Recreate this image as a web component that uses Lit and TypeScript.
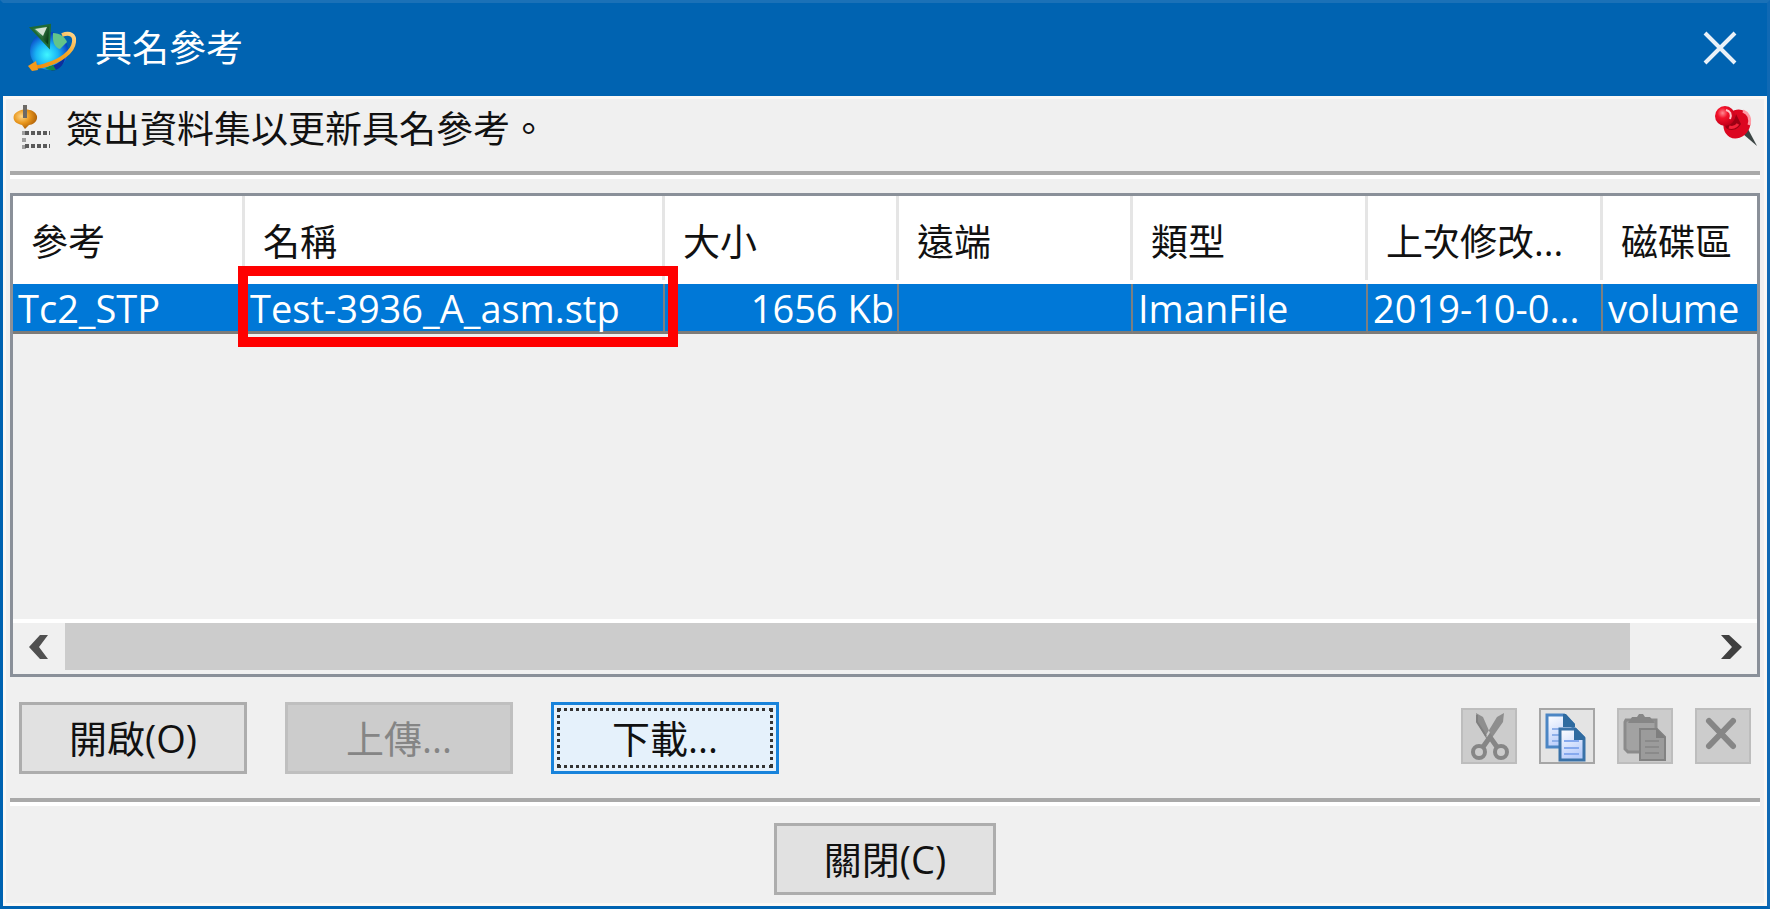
import { LitElement, html, css, svg } from "lit";
import { customElement, state } from "lit/decorators.js";

const logoIcon = svg`
  <defs>
    <radialGradient id="globe" cx="45%" cy="60%" r="58%">
      <stop offset="0" stop-color="#3ff6ff"></stop>
      <stop offset="0.5" stop-color="#19b4f5"></stop>
      <stop offset="1" stop-color="#0a3fc4"></stop>
    </radialGradient>
    <linearGradient id="cone" x1="0" y1="0" x2="1" y2="0.4">
      <stop offset="0" stop-color="#2c7a45"></stop>
      <stop offset="0.5" stop-color="#3f8a55"></stop>
      <stop offset="1" stop-color="#0b3d17"></stop>
    </linearGradient>
    <linearGradient id="ring" x1="0" y1="1" x2="1" y2="0">
      <stop offset="0" stop-color="#f08a0c"></stop>
      <stop offset="0.6" stop-color="#f5a623"></stop>
      <stop offset="1" stop-color="#ffd58a"></stop>
    </linearGradient>
  </defs>
  <circle cx="21" cy="26" r="19" fill="url(#globe)"></circle>
  <path d="M25 8c7 0 12 4 14 9l-7 7c-5-1-8-7-7-16z" fill="#63c48a"></path>
  <path d="M20 42c6-1 12-5 17-9-1 7-6 12-13 13z" fill="#0d2f9c"></path>
  <path d="M17 43l8-3 3 5c-4 1-8 0-11-2z" fill="#138a4a"></path>
  <path d="M34 10c8-3 13 0 12 7-1 10-14 19-28 23-5 2-9 2-13 2" fill="none" stroke="url(#ring)" stroke-width="4"></path>
  <path d="M0 41l8-5 2 9-6 1z" fill="#f59a1c"></path>
  <path d="M3 3l19-3-1 22z" fill="url(#cone)" stroke="#1f6a35" stroke-width="2"></path>
  <path d="M7 4l12-2-4 9z" fill="#d4e3d5"></path>
`;

const checkoutIcon = svg`
  <defs>
    <radialGradient id="amber" cx="35%" cy="35%" r="70%">
      <stop offset="0" stop-color="#ffd98c"></stop>
      <stop offset="0.5" stop-color="#e8961c"></stop>
      <stop offset="1" stop-color="#a85a06"></stop>
    </radialGradient>
  </defs>
  <path d="M1 10c4-7 20-8 23 1 1 6-5 9-8 9l-4 4-3-4C4 19-1 16 1 10z" fill="url(#amber)"></path>
  <path d="M10 0h4v13h-4z" fill="#6d6a66"></path>
  <path d="M11 26v18" stroke="#a0a0a0" stroke-width="4" stroke-dasharray="4 3"></path>
  <path d="M12 28h25M12 41h25" stroke="#5a5a5a" stroke-width="4" stroke-dasharray="4 2"></path>
`;

const pinIcon = svg`
  <defs>
    <radialGradient id="pinhead" cx="38%" cy="35%" r="65%">
      <stop offset="0" stop-color="#ff8a92"></stop>
      <stop offset="0.4" stop-color="#f3122a"></stop>
      <stop offset="1" stop-color="#c4001a"></stop>
    </radialGradient>
  </defs>
  <path d="M28 29l5-5 9 17z" fill="#3b4443"></path>
  <ellipse cx="22" cy="19" rx="13" ry="15" transform="rotate(30 22 19)" fill="#dc0620"></ellipse>
  <path d="M28 6c5 2 8 7 6 14" fill="none" stroke="#ff9aa4" stroke-width="3"></path>
  <path d="M9 18c5 3 11-2 12-9l5 10c-4 7-11 7-15 4z" fill="#9c0013"></path>
  <path d="M14 22c3 1 7 0 9-3" fill="none" stroke="#f5223a" stroke-width="3"></path>
  <circle cx="10" cy="11" r="10" fill="url(#pinhead)"></circle>
  <path d="M11 5c4 1 6 4 4 9" fill="none" stroke="#ffc4c9" stroke-width="2"></path>
`;

const cutIcon = svg`
  <path d="M15 5l7 4 7 16-3 7-10-18zM43 5l-7 4-11 18 3 7 14-20z" fill="#8e8e8e"></path>
  <path d="M16 7v7l9 14" fill="none" stroke="#7f7f7f" stroke-width="2"></path>
  <circle cx="18" cy="44" r="6" fill="none" stroke="#868686" stroke-width="4"></circle>
  <circle cx="40" cy="44" r="6" fill="none" stroke="#868686" stroke-width="4"></circle>
  <path d="M22 39l7-10 7 10" fill="none" stroke="#868686" stroke-width="5"></path>
`;

const copyIcon = svg`
  <defs>
    <linearGradient id="sheet" x1="0" y1="0" x2="0.4" y2="1">
      <stop offset="0" stop-color="#ffffff"></stop>
      <stop offset="1" stop-color="#b9cdfb"></stop>
    </linearGradient>
  </defs>
  <path d="M8 7h17l9 9v23H8z" fill="url(#sheet)" stroke="#4c86c4" stroke-width="3"></path>
  <path d="M24 6h3l9 10v3H24z" fill="#2f6ba0"></path>
  <path d="M13 21h8M13 27h8M13 33h8" stroke="#8fb0ea" stroke-width="2"></path>
  <path d="M21 21h15l9 9v22H21z" fill="url(#sheet)" stroke="#3a72a8" stroke-width="3"></path>
  <path d="M35 20h2l9 9v3H35z" fill="#2f6ba0"></path>
  <path d="M25 33h15M25 40h15M25 46h15" stroke="#86a9ee" stroke-width="2"></path>
`;

const pasteIcon = svg`
  <path d="M9 12h30v32H11l-3-3V14z" fill="#a2a2a2" stroke="#8b8b8b" stroke-width="3"></path>
  <path d="M11 15l4-6h5l2-3h4l2 3h5l5 6z" fill="#868686"></path>
  <path d="M23 21h17l8 8v23H23z" fill="#9b9b9b" stroke="#828282" stroke-width="2"></path>
  <path d="M39 20v10h9z" fill="#7e7e7e"></path>
  <path d="M28 33h14M28 39h14M28 45h14" stroke="#8a8a8a" stroke-width="2"></path>
`;

const deleteIcon = svg`
  <path d="M14 13l24 25M38 13L14 38" stroke="#868686" stroke-width="6" stroke-linecap="round"></path>
`;

interface Column {
  key: string;
  label: string;
  kind: string;
}

const columns: Column[] = [
  { key: "reference", label: "參考", kind: "reference" },
  { key: "name", label: "名稱", kind: "name" },
  { key: "size", label: "大小", kind: "size" },
  { key: "remote", label: "遠端", kind: "remote" },
  { key: "type", label: "類型", kind: "type" },
  { key: "modified", label: "上次修改...", kind: "modified" },
  { key: "volume", label: "磁碟區", kind: "volume" },
];

const rows: Record<string, string>[] = [
  {
    reference: "Tc2_STP",
    name: "Test-3936_A_asm.stp",
    size: "1656 Kb",
    remote: "",
    type: "ImanFile",
    modified: "2019-10-0...",
    volume: "volume",
  },
];

const tools = [
  { label: "剪下", icon: cutIcon, disabled: true },
  { label: "複製", icon: copyIcon, disabled: false },
  { label: "貼上", icon: pasteIcon, disabled: true },
  { label: "刪除", icon: deleteIcon, disabled: true },
];

@customElement("app-root")
export class AppRoot extends LitElement {
  @state() private selected = 0;

  static styles = css`
    :host {
      display: flex;
      flex-direction: column;
      box-sizing: border-box;
      min-height: 100vh;
      border: 3px solid #0063b1;
      border-top-color: #1b71b7;
      border-right-color: #1069b4;
      background: #f0f0f0;
      color: #111;
      font-family: "Open Sans", "Noto Sans CJK TC", sans-serif;
      font-size: 37px;
      line-height: 48px;
    }
    * {
      box-sizing: border-box;
    }
    button {
      font: inherit;
      color: inherit;
      padding: 0;
      margin: 0;
    }
    svg {
      display: block;
      flex: none;
      overflow: visible;
    }
    .titlebar {
      display: flex;
      align-items: center;
      height: 93px;
      padding: 0 31px 4px 25px;
      background: #0063b1;
      color: #fff;
    }
    .title {
      flex: 1;
      margin: 0 0 0 17px;
      font-size: 37px;
      font-weight: 400;
    }
    .window-close {
      border: 0;
      background: none;
    }
    .body {
      flex: 1;
      display: flex;
      flex-direction: column;
      padding: 0 4px 8px 4px;
      border: 3px solid #faf8f5;
    }
    .message {
      display: flex;
      align-items: flex-start;
      height: 72px;
      padding: 6px 3px 0 3px;
    }
    .message-text {
      flex: 1;
      margin: 0 0 0 13px;
    }
    .pin {
      border: 0;
      background: none;
    }
    .rule {
      flex: none;
      width: 100%;
      height: 8px;
      margin: 0;
      border: 0;
      border-top: 4px solid #a9a9a9;
      background: #fff;
    }
    .grid-box {
      flex: 1;
      display: flex;
      flex-direction: column;
      margin-top: 14px;
      border: 3px solid #8a9099;
    }
    .viewport {
      flex: 1;
      position: relative;
      border-bottom: 4px solid #fff;
    }
    .files {
      width: 100%;
      table-layout: fixed;
      border-collapse: separate;
      border-spacing: 0;
    }
    .files th,
    .files td {
      white-space: nowrap;
      text-align: left;
      font-weight: 400;
    }
    .files th {
      height: 88px;
      padding: 4px 0 0 18px;
      background: linear-gradient(#e5e5e5, #e5e5e5) right top / 3px 84px no-repeat #fff;
    }
    .files th:last-child {
      background: #fff;
    }
    .files td {
      height: 50px;
      padding: 0 5px;
      border-right: 2px solid #7d7f80;
      border-bottom: 3px solid #7d7b78;
      font-size: 38px;
      line-height: 44px;
    }
    .files td:last-child {
      border-right: 0;
    }
    .files .size-cell {
      text-align: right;
      padding-right: 3px;
    }
    .selected {
      background: #0078d7;
      color: #fff;
    }
    .col-reference {
      width: 232px;
    }
    .col-name {
      width: 420px;
    }
    .col-size,
    .col-remote {
      width: 234px;
    }
    .col-type,
    .col-modified {
      width: 235px;
    }
    .highlight {
      position: absolute;
      left: 225px;
      top: 70px;
      width: 440px;
      height: 81px;
      border: 10px solid #f00;
      pointer-events: none;
    }
    .scrollbar {
      display: flex;
      height: 51px;
      padding-bottom: 4px;
    }
    .arrow {
      display: flex;
      align-items: center;
      justify-content: center;
      width: 52px;
      border: 0;
      background: #f0f0f0;
    }
    .track {
      flex: 1;
    }
    .thumb {
      height: 100%;
      background: #ccc;
    }
    .actions {
      display: flex;
      align-items: center;
      gap: 38px;
      padding: 25px 9px 24px 9px;
    }
    .button {
      width: 228px;
      height: 72px;
      border: 3px solid #adadad;
      background: #e1e1e1;
      font-size: 38px;
    }
    .button:disabled {
      border-color: #bfbfbf;
      background: #ccc;
      color: #858585;
    }
    .button.default {
      padding: 3px;
      border-color: #1883db;
      background: #e5f1fb;
    }
    .focus-ring {
      display: flex;
      align-items: center;
      justify-content: center;
      height: 100%;
      border: 3px dotted #333;
    }
    .tools {
      display: flex;
      gap: 22px;
      margin-left: auto;
      padding-bottom: 4px;
    }
    .tool {
      width: 56px;
      height: 56px;
      border: 2px solid #a6a6a6;
      background: #e4e4e4;
    }
    .tool:disabled {
      border-color: #bdbdbd;
      background: #ccc;
    }
    .footer {
      display: flex;
      justify-content: center;
      padding-top: 17px;
    }
    .footer .button {
      width: 222px;
    }
  `;

  private visibleShare = 95.4;

  private renderRow(row: Record<string, string>, index: number) {
    return html`<tr
      class=${index === this.selected ? "selected" : ""}
      @click=${() => (this.selected = index)}
    >
      ${columns.map((c) => html`<td class="${c.kind}-cell">${row[c.key]}</td>`)}
    </tr>`;
  }

  render() {
    return html`
      <header class="titlebar">
        <svg width="50" height="46" viewBox="0 0 50 46" aria-hidden="true">${logoIcon}</svg>
        <h1 class="title" lang="zh-TW">具名參考</h1>
        <button class="window-close" aria-label="關閉視窗">
          <svg width="32" height="32" viewBox="0 0 32 32">
            <path d="M1 1l30 30M31 1L1 31" stroke="#e9f1f8" stroke-width="4"></path>
          </svg>
        </button>
      </header>
      <main class="body" lang="zh-TW">
        <div class="message">
          <svg width="40" height="44" viewBox="0 0 40 44" aria-hidden="true">${checkoutIcon}</svg>
          <p class="message-text">簽出資料集以更新具名參考。</p>
          <button class="pin" aria-label="釘選">
            <svg width="42" height="42" viewBox="0 0 42 42">${pinIcon}</svg>
          </button>
        </div>
        <hr class="rule" />
        <section class="grid-box">
          <div class="viewport">
            <table class="files">
              <colgroup>
                ${columns.map((c) => html`<col class="col-${c.kind}" />`)}
              </colgroup>
              <thead>
                <tr>
                  ${columns.map((c) => html`<th scope="col">${c.label}</th>`)}
                </tr>
              </thead>
              <tbody>
                ${rows.map((r, i) => this.renderRow(r, i))}
              </tbody>
            </table>
            <div class="highlight"></div>
          </div>
          <div class="scrollbar">
            <button class="arrow" aria-label="向左捲動">
              <svg width="20" height="24" viewBox="0 0 20 24">
                <path d="M11 0h8l-9 12 9 12h-8L0 12z" fill="#505050"></path>
              </svg>
            </button>
            <div class="track">
              <div class="thumb" style="width: ${this.visibleShare}%"></div>
            </div>
            <button class="arrow" aria-label="向右捲動">
              <svg width="20" height="24" viewBox="0 0 20 24">
                <path d="M8 0H0l11 12L0 24h9l12-12z" fill="#404040"></path>
              </svg>
            </button>
          </div>
        </section>
        <div class="actions">
          <button class="button">開啟(O)</button>
          <button class="button" disabled>上傳...</button>
          <button class="button default"><span class="focus-ring">下載...</span></button>
          <div class="tools">
            ${tools.map(
              (t) => html`<button class="tool" aria-label=${t.label} ?disabled=${t.disabled}>
                <svg width="52" height="52" viewBox="2 2 52 52">${t.icon}</svg>
              </button>`
            )}
          </div>
        </div>
        <hr class="rule" />
        <footer class="footer">
          <button class="button">關閉(C)</button>
        </footer>
      </main>
    `;
  }
}
